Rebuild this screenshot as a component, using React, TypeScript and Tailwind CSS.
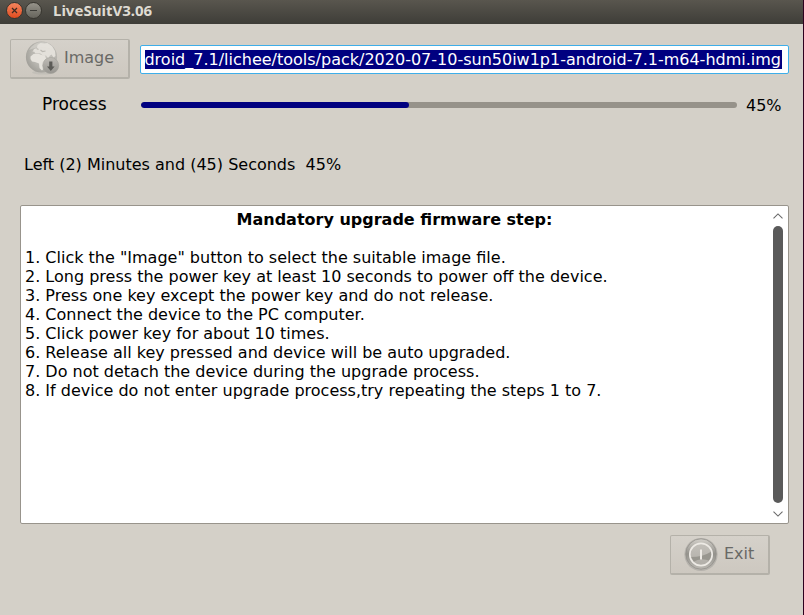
const steps = [
  'Click the "Image" button to select the suitable image file.',
  'Long press the power key at least 10 seconds to power off the device.',
  'Press one key except the power key and do not release.',
  'Connect the device to the PC computer.',
  'Click power key for about 10 times.',
  'Release all key pressed and device will be auto upgraded.',
  'Do not detach the device during the upgrade process.',
  'If device do not enter upgrade process,try repeating the steps 1 to 7.',
];

function GlobeIcon() {
  return (
    <svg width="36" height="36" viewBox="0 0 36 36" className="shrink-0">
      <defs>
        <radialGradient id="globe" cx="0.6" cy="0.4" r="0.65">
          <stop offset="0" stopColor="#cbc8c2" />
          <stop offset="0.65" stopColor="#b7b5af" />
          <stop offset="1" stopColor="#a09e98" />
        </radialGradient>
        <linearGradient id="badge" x1="0" y1="0" x2="0" y2="1">
          <stop offset="0" stopColor="#bfbcb6" />
          <stop offset="1" stopColor="#979590" />
        </linearGradient>
      </defs>
      <ellipse cx="18" cy="31.5" rx="11" ry="2" fill="#c2bfb8" />
      <circle cx="16.500" cy="16" r="15.600" fill="url(#globe)" />
      <path d="M5.500 15.500l3-2.500 4.500-.5 3.500 1.500 3.500.5 1 3 2.500 1-3 4-1 4-2.500 3-2.500-2.500-.5-4.500-4-1.500-3-.5-1.500-2.500z" fill="#e6e3dd" />
      <path d="M7.500 11l1.500-3 3-1 .5-3 3-2 4 .5 3-.5 4.500 3 3 5 .5 5-2 1.500-2-3-2 1.500-1 3-2.500-3.500-2.500.5-3-2.500-3-.5-2 .5-1.500-2z" fill="#e3e0da" />
      <path d="M15.500 9l2 1.500 3-.5M11.500 7.500l2 1" fill="none" stroke="#bbb8b2" strokeWidth="1.200" />
      <path d="M4 9Q9 1 17 1T29 9Q17 3 4 9z" fill="#e5e2dc" fillOpacity=".45" />
      <circle cx="25.700" cy="24.500" r="8" fill="url(#badge)" stroke="#a3a19b" strokeWidth=".6" />
      <path d="M24.200 20.500h3.200v5h2.200L25.800 30 22 25.500h2.200z" fill="#5c5b57" />
    </svg>
  );
}

function PowerIcon() {
  return (
    <svg width="36" height="36" viewBox="0 0 36 36" className="shrink-0">
      <defs>
        <linearGradient id="ring" x1="0" y1="0" x2="0" y2="1">
          <stop offset="0" stopColor="#d3d0ca" />
          <stop offset="0.5" stopColor="#94928c" />
          <stop offset="1" stopColor="#bbb8b2" />
        </linearGradient>
        <linearGradient id="face" x1="0" y1="0" x2="0" y2="1">
          <stop offset="0" stopColor="#c3c0ba" />
          <stop offset="1" stopColor="#b1aea8" />
        </linearGradient>
      </defs>
      <circle cx="18" cy="17.500" r="16.600" fill="#b5b2ac" />
      <circle cx="18" cy="17" r="15.200" fill="url(#ring)" stroke="#93918b" strokeWidth=".8" />
      <circle cx="18" cy="17.500" r="11" fill="url(#face)" />
      <path d="M7.500 20Q20 20 28.500 14.500A11 11 0 0 1 27 24Q18 20 10 25z" fill="#98968f" />
      <circle cx="18" cy="17.500" r="11.200" fill="none" stroke="#edeae5" strokeWidth="1.700" />
      <path d="M18 12.500v10" stroke="#edeae5" strokeWidth="2" />
    </svg>
  );
}

function Chevron({ up = false }: { up?: boolean }) {
  return (
    <svg width="10" height="6" viewBox="0 0 10 6" fill="none" stroke="#696969" strokeWidth="1.100">
      <path d={up ? 'M.5 5.300L5 .9l4.500 4.400' : 'M.5.7L5 5.100 9.500.7'} />
    </svg>
  );
}

const buttonStyle =
  'flex items-center rounded-[2px] border border-r-2 border-b-2 border-[#b4b1a9] bg-linear-to-b from-[#d5d1ca] to-[#cdc8c0] text-[#696966]';

export default function App() {
  return (
    <div className="flex h-[615px] w-[804px] flex-col overflow-hidden border-r border-[#2c001e] bg-[#d4d0c8] font-['DejaVu_Sans',sans-serif] text-[16px] leading-[19px] whitespace-nowrap text-black">
      <header className="flex h-6 shrink-0 items-center bg-linear-to-b from-[#59564e] to-[#3e3d38] pb-[3px] pl-[6px]">
        <button className="flex size-[17px] items-center justify-center rounded-full border border-[#37352f] bg-linear-to-b from-[#f4845c] to-[#df4b1c]">
          <svg width="7" height="7" viewBox="0 0 7 7" stroke="#3d2920" strokeWidth="1.200">
            <path d="M1 1l5 5M6 1L1 6" />
          </svg>
        </button>
        <button className="ml-[2px] flex size-[17px] items-center justify-center rounded-full border border-[#37352f] bg-linear-to-b from-[#96938a] to-[#66645c]">
          <span className="h-px w-[7px] bg-[#3c3b37]" />
        </button>
        <h1 className="ml-[11px] font-['Noto_Sans',sans-serif] text-[15px] font-bold text-[#dfdbd2]">LiveSuitV3.06</h1>
      </header>

      <main className="flex flex-col">
        <div className="mt-[15px] ml-[10px] flex items-start">
          <button className={`${buttonStyle} h-10 w-[120px] pl-[14px]`}>
            <GlobeIcon />
            <span className="ml-[3px] pb-[2px]">Image</span>
          </button>
          <div className="mt-[6px] ml-[10px] flex h-[29px] w-[649px] rounded-[2px] border border-[#3daee9] bg-white pt-[4px] pl-[4px]">
            <span className="flex h-[19px] w-[637px] justify-end overflow-hidden bg-[#000080] pr-px text-white">
              droid_7.1/lichee/tools/pack/2020-07-10-sun50iw1p1-android-7.1-m64-hdmi.img
            </span>
          </div>
        </div>

        <div className="mt-[15px] flex h-[22px] items-center pl-[42px]">
          <span className="w-[99px] pb-[2px] text-[17px]">Process</span>
          <div className="h-[6px] w-[596px] overflow-hidden rounded-full bg-[#96928a]">
            <div className="h-full w-[45%] rounded-full bg-[#000080]" />
          </div>
          <span className="ml-[9px] pt-px">45%</span>
        </div>

        <p className="mt-[39px] ml-6 whitespace-pre">Left (2) Minutes and (45) Seconds  45%</p>

        <section className="mt-[31px] ml-5 flex h-[319px] w-[769px] rounded-[2px] border border-[#98948c] bg-white">
          <div className="w-[747px] pt-[4px]">
            <h2 className="text-center font-bold">Mandatory upgrade firmware step:</h2>
            <ol className="mt-[19px] pl-[4px]">
              {steps.map((step, i) => (
                <li key={step}>{i + 1}. {step}</li>
              ))}
            </ol>
          </div>
          <div className="flex w-5 flex-col items-center pt-[7px]">
            <Chevron up />
            <div className="mt-[7px] mb-[8px] h-[277px] w-[10px] rounded-full bg-[#5a5a5a]" />
            <Chevron />
          </div>
        </section>

        <button className={`${buttonStyle} mt-[11px] ml-[670px] h-10 w-[100px] pl-[12px]`}>
          <PowerIcon />
          <span className="ml-[5px] pb-[2px]">Exit</span>
        </button>
      </main>
    </div>
  );
}
